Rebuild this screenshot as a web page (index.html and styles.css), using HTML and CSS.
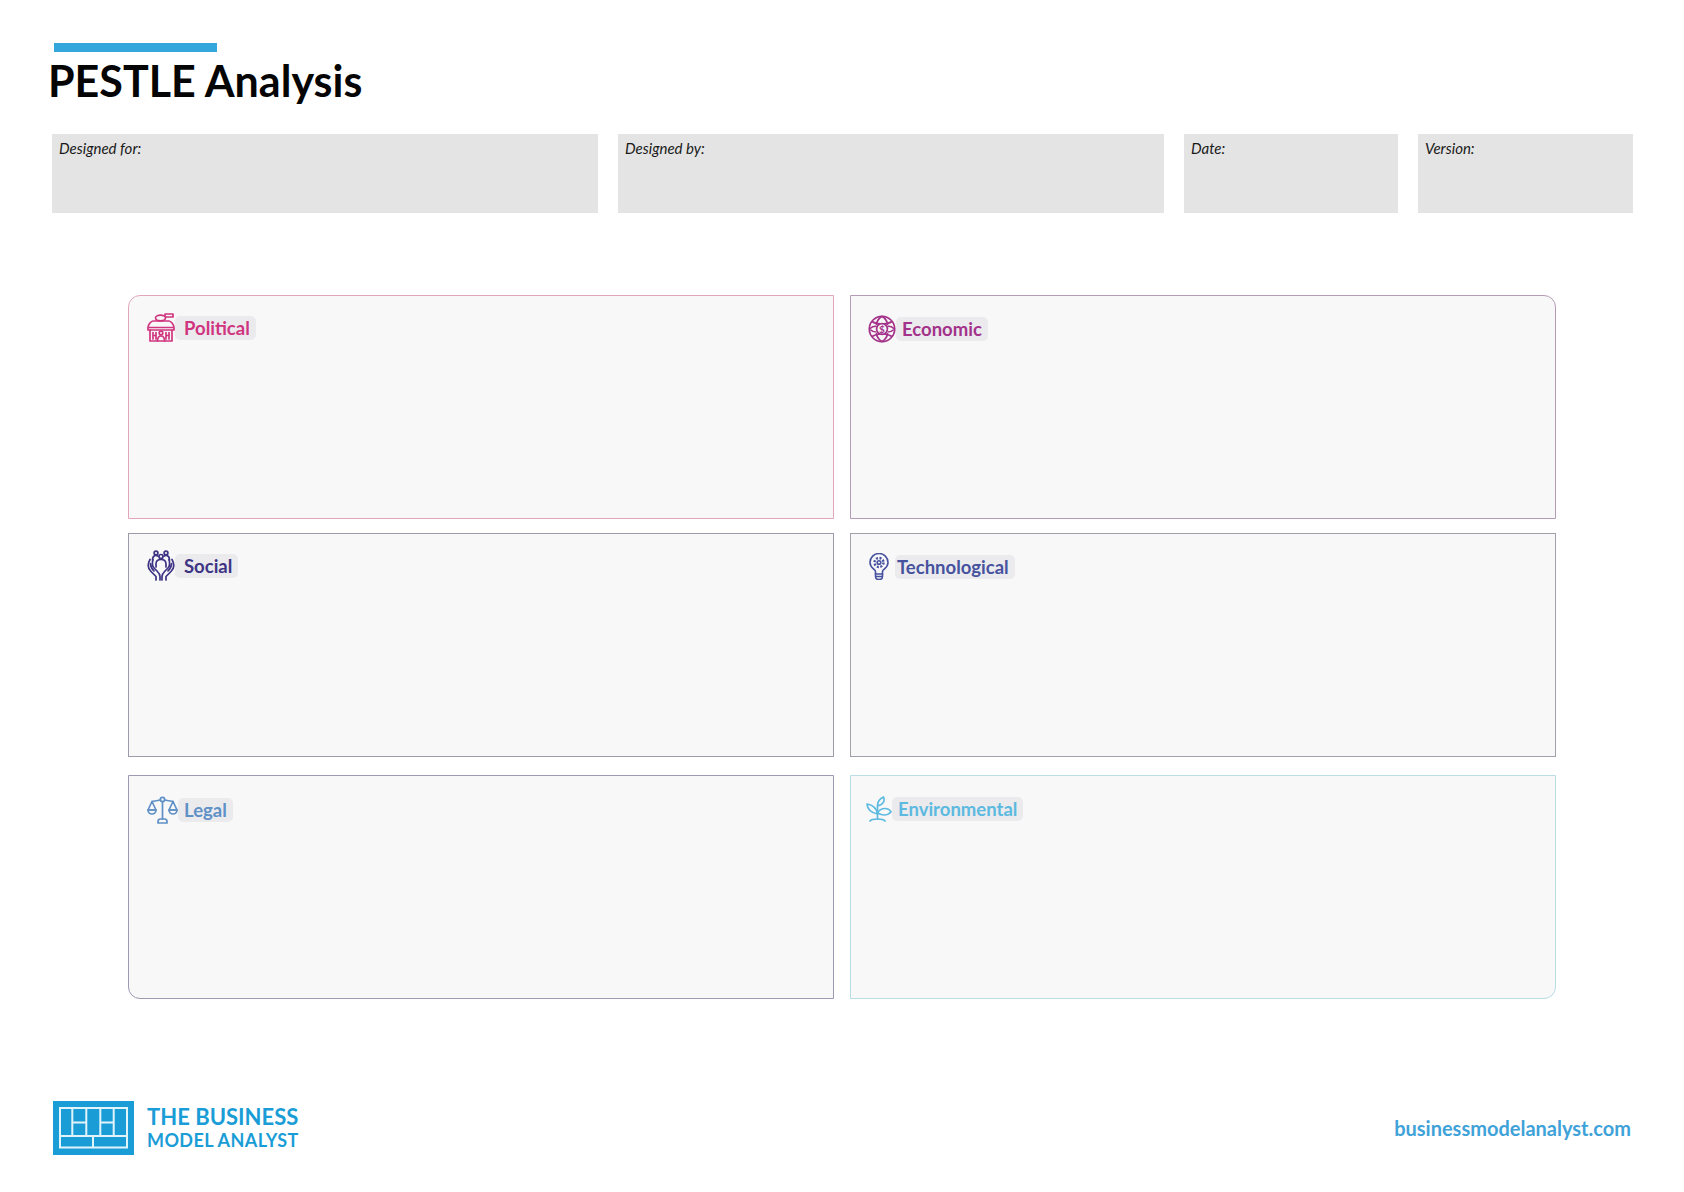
FILE: index.html
```html
<!DOCTYPE html>
<html lang="en">
<head>
<meta charset="utf-8">
<title>PESTLE Analysis</title>
<link rel="stylesheet" href="styles.css">
</head>
<body>
<main class="page">
  <header class="header">
    <div class="accent"></div>
    <h1 class="title">PESTLE Analysis</h1>
  </header>

  <section class="meta">
    <div class="meta-box">Designed for:</div>
    <div class="meta-box">Designed by:</div>
    <div class="meta-box">Date:</div>
    <div class="meta-box">Version:</div>
  </section>

  <section class="board">
    <article class="panel political">
      <div class="head">
        <svg class="icon" width="28" height="29" viewBox="0 0 28 29" fill="none" stroke="currentColor" stroke-width="1.700" stroke-linejoin="round" stroke-linecap="round">
          <ellipse cx="13.500" cy="5" rx="5" ry="2.800"/>
          <path d="M18 3V1h8v3h-7"/>
          <path d="M6 8h16c2 0 5 4 5 6.500H1C1 12 4 8 6 8zM1 14.500V17h26v-2.500"/>
          <path d="M3 17v11h22V17"/>
          <path d="M6 19.500v6.500M6 22.500h2.500M9 19.500v6.500M19 19.500v6.500M19 22.500h3M22 19.500v6.500"/>
          <circle cx="14" cy="20" r="1.800"/>
          <path d="M10.500 28c0-3 1.500-5 3.500-5s3.500 2 3.500 5"/>
        </svg>
        <h2 class="label">Political</h2>
      </div>
    </article>

    <article class="panel economic">
      <div class="head">
        <svg class="icon" width="28" height="28" viewBox="0 0 28 28" fill="none" stroke="currentColor" stroke-width="1.700">
          <circle cx="14" cy="14" r="12.700"/>
          <path d="M14 1.300C10 4 8.500 6.500 8.500 10M14 1.300C18 4 19.500 6.500 19.500 10M14 26.700C10 24 8.500 21.500 8.500 18M14 26.700C18 24 19.500 21.500 19.500 18"/>
          <path d="M4 6.500C7 8.500 9 9 14 9s7-.5 10-2.500M4 21.500C7 19.500 9 19 14 19s7 .5 10 2.500"/>
          <path d="M1.300 14C4 11.500 6 11 8.500 11M26.700 14C24 11.500 22 11 19.500 11M1.300 14C4 16.500 6 17 8.500 17M26.700 14C24 16.500 22 17 19.500 17"/>
          <circle cx="14" cy="14" r="5.400" fill="#f8f8f9"/>
          <text x="14" y="17.500" class="dollar" text-anchor="middle">$</text>
        </svg>
        <h2 class="label">Economic</h2>
      </div>
    </article>

    <article class="panel social">
      <div class="head">
        <svg class="icon" width="28" height="31" viewBox="0 0 28 31" fill="none" stroke="currentColor" stroke-width="1.700" stroke-linecap="round" stroke-linejoin="round">
          <circle cx="9" cy="3" r="1.900"/>
          <circle cx="14" cy="6.500" r="2"/>
          <circle cx="19" cy="3" r="1.900"/>
          <path d="M9 17v-3c0-3 2-4.500 5-4.500s5 1.500 5 4.500v3"/>
          <path d="M5.500 10c0-3 1.500-4.500 3.500-4.500 .8 0 1.500 .2 2 .6M22.500 10c0-3-1.500-4.500-3.500-4.500-.8 0-1.500 .2-2 .6"/>
          <path d="M3 9.500C.5 14 .8 18.500 4 21.500l5 5V30"/>
          <path d="M6 9.500c-1 3.500-1 6.500 1 8.500l3 3c2 2 3 3 3 5.500V30"/>
          <path d="M3.500 13.500c0 3 1 5 3.500 7.500"/>
          <path d="M25 9.500c2.500 4.500 2.200 9-1 12l-5 5V30"/>
          <path d="M22 9.500c1 3.500 1 6.500-1 8.500l-3 3c-2 2-3 3-3 5.500V30"/>
          <path d="M24.500 13.500c0 3-1 5-3.500 7.500"/>
        </svg>
        <h2 class="label">Social</h2>
      </div>
    </article>

    <article class="panel tech">
      <div class="head">
        <svg class="icon" width="20" height="27" viewBox="0 0 20 27" fill="none" stroke="currentColor" stroke-width="1.600" stroke-linecap="round" stroke-linejoin="round">
          <path d="M6.500 21v-2.500C6.500 16.500 1 15 1 9.500a9 9 0 0 1 18 0c0 5.500-5.500 7-5.500 9V21z"/>
          <path d="M6.500 21v2.500a3.500 3 0 0 0 7 0V21M6.500 23.500h7"/>
          <circle cx="10" cy="9.500" r="1.800"/>
          <circle cx="10" cy="9.500" r="4.500" stroke-width="2.400" stroke-dasharray="2 1.530" stroke-linecap="butt"/>
        </svg>
        <h2 class="label">Technological</h2>
      </div>
    </article>

    <article class="panel legal">
      <div class="head">
        <svg class="icon" width="31" height="28" viewBox="0 0 31 28" fill="none" stroke="currentColor" stroke-width="1.700" stroke-linecap="round" stroke-linejoin="round">
          <circle cx="15.500" cy="3.500" r="2.200"/>
          <path d="M5 5.500l8.500-1.500M26 5.500l-8.500-1.500"/>
          <path d="M15.500 5.700V23"/>
          <path d="M11 27v-1.500c0-1.500 1-2.500 2.500-2.500h4c1.500 0 2.500 1 2.500 2.500V27z"/>
          <path d="M5 5.500L1 14h8zM26 5.500L22 14h8z"/>
          <path d="M1 14a4 4 0 0 0 8 0zM22 14a4 4 0 0 0 8 0z"/>
        </svg>
        <h2 class="label">Legal</h2>
      </div>
    </article>

    <article class="panel environmental">
      <div class="head">
        <svg class="icon" width="26" height="26" viewBox="0 0 26 26" fill="none" stroke="currentColor" stroke-width="1.700" stroke-linecap="round" stroke-linejoin="round">
          <path d="M11.500 23V10c0-4 1.500-7 6-9 1.500 4 0 7.500-6 9"/>
          <path d="M11.500 18C10.500 12 7 9 1 8c.5 5.500 5 9 10.500 10z"/>
          <path d="M11.500 17c2-3.500 4.500-4.500 7.500-4.500 3 0 5 1.500 6 3.500-2 2-4 3-7 3-2.500 0-4.500-1-6.500-2z"/>
          <path d="M4 25c1-1.500 4-2 7.500-2s6.500.5 7.500 2"/>
        </svg>
        <h2 class="label">Environmental</h2>
      </div>
    </article>
  </section>

  <footer class="footer">
    <div class="brand">
      <svg class="logo" width="81" height="54" viewBox="0 0 81 54" fill="none">
        <rect width="81" height="54" fill="#1a9dd6"/>
        <g stroke="#e2f4fb" stroke-width="2">
          <rect x="7" y="7" width="67" height="39.500"/>
          <path d="M19.300 7v27.500M33.300 7v27.500M47.300 7v27.500M60.700 7v27.500M19.300 21.500h14M47.300 21.500h13.400M7 35h67M40 35v11.500"/>
        </g>
      </svg>
      <div class="brand-name">
        <span class="brand-top">THE BUSINESS</span>
        <span class="brand-bottom">MODEL ANALYST</span>
      </div>
    </div>
    <div class="url">businessmodelanalyst.com</div>
  </footer>
</main>
</body>
</html>
```

FILE: styles.css
```css
* { box-sizing: border-box; }

body {
  margin: 0;
  background: #fff;
  color: #000;
  font-family: "Lato", "Liberation Sans", sans-serif;
}

.page {
  width: 1684px;
  height: 1192px;
  padding: 43px 52px 0;
  overflow: hidden;
}

.accent {
  width: 163px;
  height: 9px;
  margin-left: 2px;
  background: #33a7dc;
}

.title {
  margin: 3px 0 0 -4px;
  font-size: 43px;
  line-height: 52px;
  font-weight: 700;
  color: #050505;
}

.meta {
  display: grid;
  grid-template-columns: 546px 546px 214px 215px;
  column-gap: 20px;
  margin-top: 27px;
}

.meta-box {
  height: 79px;
  padding: 5px 7px;
  background: #e4e4e4;
  font-size: 15px;
  line-height: 18px;
  font-style: italic;
  font-weight: 400;
  color: #1a1a1a;
}

.board {
  display: grid;
  grid-template-columns: 706px 706px;
  grid-template-rows: 224px 224px 224px;
  column-gap: 16px;
  row-gap: 14px;
  margin: 82px 0 0 76px;
}

.panel {
  padding: 18px 0 0 19px;
  background: #f8f8f9;
  border: 1px solid #a0a0aa;
}

.panel.legal,
.panel.environmental { margin-top: 4px; height: 224px; }

.head {
  display: flex;
  align-items: center;
}

.label {
  margin: 0;
  padding: 0 6px 0 9px;
  border-radius: 5px;
  background: #ebebee;
  font-size: 18.500px;
  line-height: 24px;
  font-weight: 700;
}

.political { border-color: #e2a6bb; border-top-left-radius: 12px; color: #d0357f; padding-left: 18px; padding-top: 17px; }
.economic { border-color: #b59cb6; border-top-right-radius: 12px; color: #a3328a; padding-left: 17px; padding-top: 19px; }
.social { border-color: #9d9ba9; color: #3d3484; padding-top: 16px; padding-left: 18px; }
.tech { border-color: #a0a1ab; color: #46529e; padding-left: 18px; padding-top: 19px; }
.legal { border-color: #9a9ab2; border-bottom-left-radius: 12px; color: #5f90c6; padding-top: 20px; padding-left: 18px; }
.environmental { border-color: #b8dde3; border-bottom-right-radius: 12px; color: #5cb9df; padding-left: 15px; padding-top: 20px; }

.economic .label { padding-left: 6px; }
.tech .label { margin-left: 6px; padding-left: 2px; }
.legal .label { padding-left: 6px; }
.environmental .label { padding-left: 6px; }

.dollar {
  font-family: "Lato", sans-serif;
  font-size: 10px;
  font-weight: 700;
  fill: currentColor;
  stroke: none;
}

.icon { flex: none; display: block; }

.footer {
  display: flex;
  align-items: center;
  justify-content: space-between;
  margin: 106px 1px 0 1px;
}

.brand {
  display: flex;
  align-items: center;
  gap: 13px;
}

.brand-name {
  display: flex;
  flex-direction: column;
  margin-bottom: 3px;
  color: #1a9dd6;
  font-weight: 700;
}

.brand-top { font-size: 22px; line-height: 26px; }
.brand-bottom { font-size: 18px; line-height: 20px; letter-spacing: .4px; }

.url {
  font-size: 20px;
  font-weight: 700;
  color: #3fa2d8;
}
```
